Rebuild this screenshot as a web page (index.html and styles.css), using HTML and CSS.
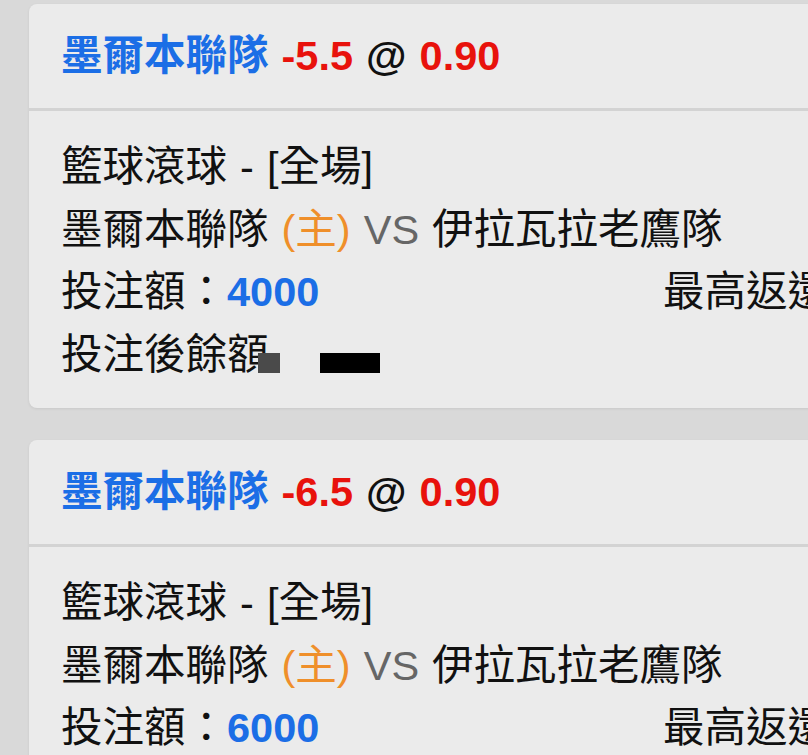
FILE: index.html
```html
<!DOCTYPE html>
<html lang="zh-Hant">
<head>
<meta charset="UTF-8">
<meta name="viewport" content="width=device-width, initial-scale=1.0">
<title>投注記錄</title>
<link rel="stylesheet" href="styles.css">
</head>
<body>
<div class="list">
    <div class="card">
        <div class="card-head">
            <span class="team">墨爾本聯隊</span>
            <span class="odds">-5.5</span> @ <span class="odds">0.90</span>
        </div>
        <div class="card-body">
            <div class="line">籃球滾球 - [全場]</div>
            <div class="line">墨爾本聯隊 <span class="home">(主)</span> <span class="vs">VS</span> 伊拉瓦拉老鷹隊</div>
            <div class="line cols">
                <div>投注額：<span class="amount">4000</span></div>
                <div>最高返還：<span class="amount">7600</span></div>
            </div>
            <div class="line">投注後餘額<span class="mask mask-gray"></span><span class="mask mask-black"></span></div>
        </div>
    </div>

    <div class="card">
        <div class="card-head">
            <span class="team">墨爾本聯隊</span>
            <span class="odds">-6.5</span> @ <span class="odds">0.90</span>
        </div>
        <div class="card-body">
            <div class="line">籃球滾球 - [全場]</div>
            <div class="line">墨爾本聯隊 <span class="home">(主)</span> <span class="vs">VS</span> 伊拉瓦拉老鷹隊</div>
            <div class="line cols">
                <div>投注額：<span class="amount">6000</span></div>
                <div>最高返還：<span class="amount">11400</span></div>
            </div>
            <div class="line">投注後餘額<span class="mask mask-gray"></span><span class="mask mask-black"></span></div>
        </div>
    </div>
</div>
</body>
</html>
```

FILE: styles.css
```css
html, body {
    margin: 0;
    padding: 0;
}

body {
    background-color: #d9d9d9;
    font-family: "Liberation Sans", "Noto Sans CJK TC", sans-serif;
    font-size: 41.5px;
    word-spacing: 1.5px;
    color: #111;
    overflow: hidden;
}

.list {
    padding: 4px 0 0 29px;
    display: flex;
    flex-direction: column;
    gap: 32px;
    width: 1300px;
}

.card {
    background-color: #ebebeb;
    border-radius: 8px;
    box-shadow: 0 1px 3px rgba(0, 0, 0, 0.08);
}

.card-head {
    padding: 21px 32px;
    line-height: 62px;
    font-weight: bold;
    border-bottom: 3px solid #d3d3d3;
}
.team {
    color: #1b6ee6;
}
.odds {
    color: #e8120c;
}

.card-body {
    padding: 25px 32px 22px;
}
.line {
    line-height: 62.5px;
    white-space: nowrap;
}
.cols {
    display: grid;
    grid-template-columns: 602px 602px;
}
.amount {
    color: #1b6ee6;
    font-weight: bold;
}
.home {
    color: #ef8f2a;
}
.vs {
    color: #666;
}

.mask {
    display: inline-block;
    height: 20px;
    vertical-align: middle;
    margin-top: 10px;
}
.mask-gray {
    width: 22px;
    margin-left: -11px;
    background-color: #4a4a4a;
}
.mask-black {
    width: 60px;
    margin-left: 40px;
    background-color: #000;
}
```
